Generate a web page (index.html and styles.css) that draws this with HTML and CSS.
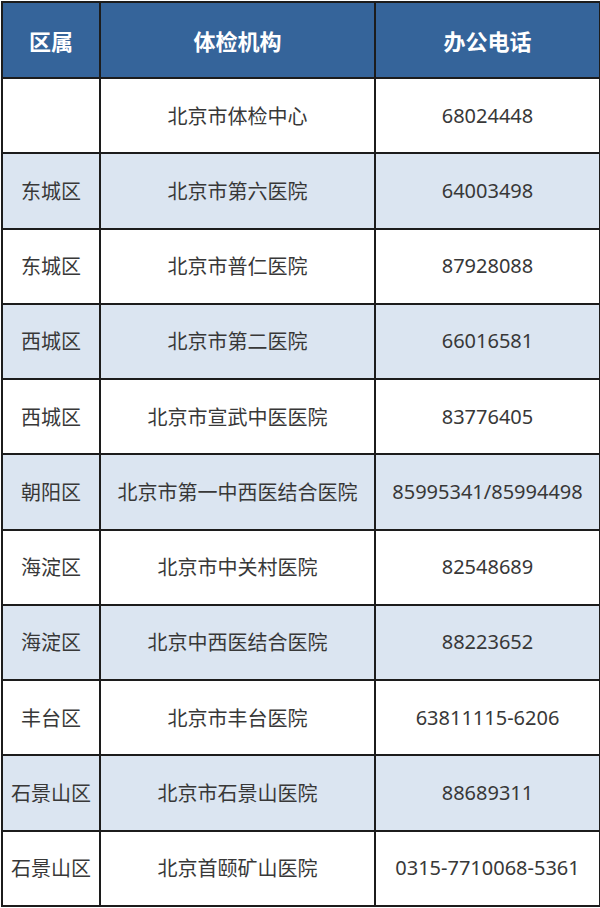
FILE: index.html
```html
<!DOCTYPE html>
<html lang="zh-CN">
<head>
<meta charset="utf-8">
<title>体检机构</title>
<link rel="stylesheet" href="styles.css">
</head>
<body>
<table class="list">
  <colgroup>
    <col class="c-area">
    <col class="c-org">
    <col class="c-tel">
  </colgroup>
  <thead>
    <tr><th>区属</th><th>体检机构</th><th>办公电话</th></tr>
  </thead>
  <tbody>
    <tr><td></td><td>北京市体检中心</td><td class="num">68024448</td></tr>
    <tr class="alt"><td>东城区</td><td>北京市第六医院</td><td class="num">64003498</td></tr>
    <tr><td>东城区</td><td>北京市普仁医院</td><td class="num">87928088</td></tr>
    <tr class="alt"><td>西城区</td><td>北京市第二医院</td><td class="num">66016581</td></tr>
    <tr><td>西城区</td><td>北京市宣武中医医院</td><td class="num">83776405</td></tr>
    <tr class="alt"><td>朝阳区</td><td>北京市第一中西医结合医院</td><td class="num">85995341/85994498</td></tr>
    <tr><td>海淀区</td><td>北京市中关村医院</td><td class="num">82548689</td></tr>
    <tr class="alt"><td>海淀区</td><td>北京中西医结合医院</td><td class="num">88223652</td></tr>
    <tr><td>丰台区</td><td>北京市丰台医院</td><td class="num">63811115-6206</td></tr>
    <tr class="alt"><td>石景山区</td><td>北京市石景山医院</td><td class="num">88689311</td></tr>
    <tr><td>石景山区</td><td>北京首颐矿山医院</td><td class="num">0315-7710068-5361</td></tr>
  </tbody>
</table>
</body>
</html>
```

FILE: styles.css
```css
html, body {
  margin: 0;
  padding: 0;
  background: #ffffff;
}
.list {
  border-collapse: collapse;
  table-layout: fixed;
  width: 598px;
  margin: 1px 0 0 1px;
  font-family: "Noto Sans", "Noto Sans CJK SC", sans-serif;
  color: #383838;
}
.c-area { width: 98px; }
.c-org { width: 275px; }
.c-tel { width: 225px; }
.list th, .list td {
  border: 2px solid #1c1c1c;
  text-align: center;
  vertical-align: middle;
  padding: 0;
  white-space: nowrap;
  line-height: 28px;
}
.list th {
  background: #35649a;
  color: #ffffff;
  font-weight: bold;
  font-size: 22px;
  height: 74px;
  font-family: "Noto Sans CJK SC", sans-serif;
}
.list td {
  font-size: 20px;
  height: 73.27px;
  font-family: "Noto Sans CJK SC", sans-serif;
}
.list td.num {
  font-family: "Noto Sans", sans-serif;
}
.list tr.alt td {
  background: #dbe5f1;
}
```
